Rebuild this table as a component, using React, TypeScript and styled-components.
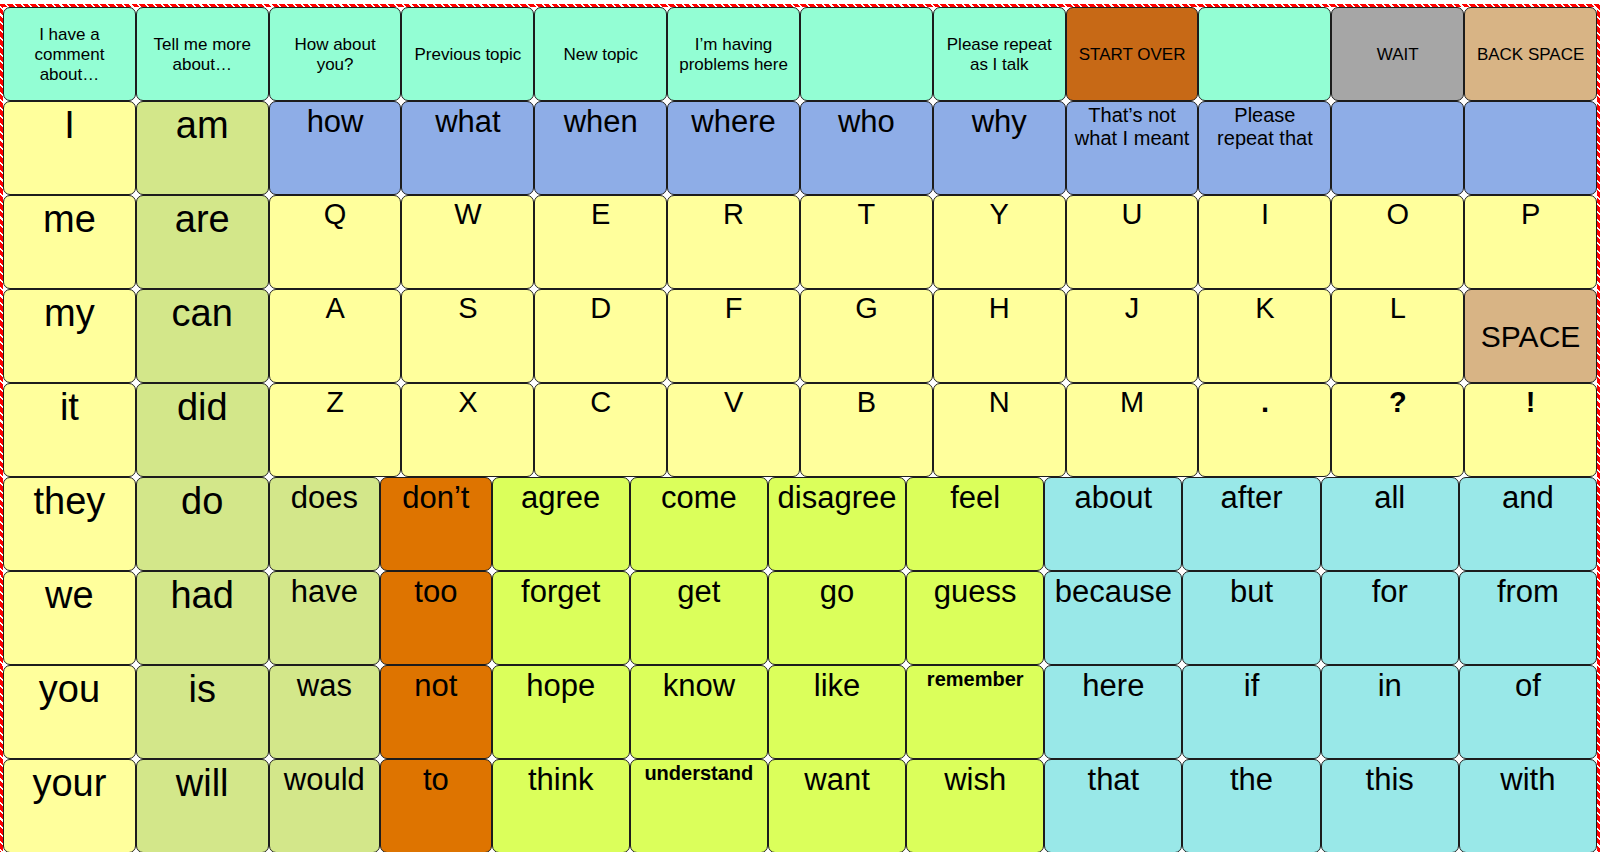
import React, { ReactElement } from 'react'
import styled, { createGlobalStyle } from 'styled-components'

const GlobalStyle = createGlobalStyle`
  html, body {
    margin: 0;
    padding: 0;
    background: #fff;
    overflow: hidden;
  }
  body {
    font-family: 'Liberation Sans', Arial, sans-serif;
    color: #000;
  }
`

const C = {
  mint: '#93fed4',
  rust: '#c76916',
  gray: '#a6a6a6',
  tan: '#d8b485',
  yellow: '#ffff9c',
  sage: '#d3e78a',
  blue: '#8eade7',
  orange: '#de7400',
  lime: '#dbff5b',
  cyan: '#99e8e8'
}

const Frame = styled.div`
  margin-top: 4px;
  border: 3px solid transparent;
  border-bottom: none;
  border-image: repeating-linear-gradient(
      45deg,
      #ff0000 0 4px,
      #ffffff 4px 5.5px
    )
    3;
  background: #fff;
`

const TopGrid = styled.div`
  display: grid;
  grid-template-columns: repeat(12, 1fr);
  grid-auto-rows: 94px;
`

const BottomGrid = styled.div`
  display: grid;
  grid-template-columns: 132.8px 132.8px 111.5px 111.5px repeat(8, 1fr);
  grid-auto-rows: 94px;
`

type CellProps = {
  $bg: string
  $size?: number
  $bold?: boolean
  $middle?: boolean
}

const Cell = styled.div<CellProps>`
  box-sizing: border-box;
  display: flex;
  justify-content: center;
  align-items: ${(p) => (p.$middle ? 'center' : 'flex-start')};
  padding: 2px 5px 0;
  text-align: center;
  background: ${(p) => p.$bg};
  border: 1px solid #1c1c1c;
  border-radius: 7px;
  font-size: ${(p) => p.$size || 31}px;
  font-weight: ${(p) => (p.$bold ? 700 : 400)};
  line-height: normal;
  overflow: hidden;
`

type Item = { t: string; bg: string; size?: number; bold?: boolean; middle?: boolean }

const topRow: Item[] = [
  { t: 'I have a comment about…', bg: C.mint },
  { t: 'Tell me more about…', bg: C.mint },
  { t: 'How about you?', bg: C.mint },
  { t: 'Previous topic', bg: C.mint },
  { t: 'New topic', bg: C.mint },
  { t: 'I’m having problems here', bg: C.mint },
  { t: '', bg: C.mint },
  { t: 'Please repeat as I talk', bg: C.mint },
  { t: 'START OVER', bg: C.rust },
  { t: '', bg: C.mint },
  { t: 'WAIT', bg: C.gray },
  { t: 'BACK SPACE', bg: C.tan }
].map((i) => ({ ...i, size: 17, middle: true }))

const pronouns = ['I', 'me', 'my', 'it', 'they', 'we', 'you', 'your']
const verbs = ['am', 'are', 'can', 'did', 'do', 'had', 'is', 'will']

const questions: Item[] = [
  ...['how', 'what', 'when', 'where', 'who', 'why'].map((t) => ({ t, bg: C.blue })),
  { t: 'That’s not what I meant', bg: C.blue, size: 20 },
  { t: 'Please repeat that', bg: C.blue, size: 20 },
  { t: '', bg: C.blue },
  { t: '', bg: C.blue }
]

const letters = (s: string[]): Item[] => s.map((t) => ({ t, bg: C.yellow, size: 29 }))

const letterRows: Item[][] = [
  letters(['Q', 'W', 'E', 'R', 'T', 'Y', 'U', 'I', 'O', 'P']),
  [
    ...letters(['A', 'S', 'D', 'F', 'G', 'H', 'J', 'K', 'L']),
    { t: 'SPACE', bg: C.tan, size: 30, middle: true }
  ],
  [
    ...letters(['Z', 'X', 'C', 'V', 'B', 'N', 'M']),
    ...['.', '?', '!'].map((t) => ({ t, bg: C.yellow, size: 29, bold: true }))
  ]
]

const helpers = ['does', 'have', 'was', 'would']
const negatives = ['don’t', 'too', 'not', 'to']
const feelings = [
  ['agree', 'come', 'disagree', 'feel'],
  ['forget', 'get', 'go', 'guess'],
  ['hope', 'know', 'like', 'remember'],
  ['think', 'understand', 'want', 'wish']
]
// long verbs are squeezed into small bold type on the board
const squeezed = ['remember', 'understand']
const smallWords = [
  ['about', 'after', 'all', 'and'],
  ['because', 'but', 'for', 'from'],
  ['here', 'if', 'in', 'of'],
  ['that', 'the', 'this', 'with']
]

const renderItem = (i: Item, key: string): ReactElement => (
  <Cell key={key} $bg={i.bg} $size={i.size} $bold={i.bold} $middle={i.middle}>
    {i.t}
  </Cell>
)

const side = (row: number): Item[] => [
  { t: pronouns[row], bg: C.yellow, size: 38 },
  { t: verbs[row], bg: C.sage, size: 38 }
]

function App(): ReactElement {
  const upper: Item[][] = [topRow, [...side(0), ...questions]]
  letterRows.forEach((r, n) => upper.push([...side(n + 1), ...r]))

  const lower: Item[][] = feelings.map((f, n) => [
    ...side(n + 4),
    { t: helpers[n], bg: C.sage },
    { t: negatives[n], bg: C.orange },
    ...f.map((t) =>
      squeezed.includes(t) ? { t, bg: C.lime, size: 20, bold: true } : { t, bg: C.lime }
    ),
    ...smallWords[n].map((t) => ({ t, bg: C.cyan }))
  ])

  return (
    <>
      <GlobalStyle />
      <Frame>
        <TopGrid>
          {upper.map((row, r) => row.map((i, c) => renderItem(i, `u${r}-${c}`)))}
        </TopGrid>
        <BottomGrid>
          {lower.map((row, r) => row.map((i, c) => renderItem(i, `l${r}-${c}`)))}
        </BottomGrid>
      </Frame>
    </>
  )
}

export default App
